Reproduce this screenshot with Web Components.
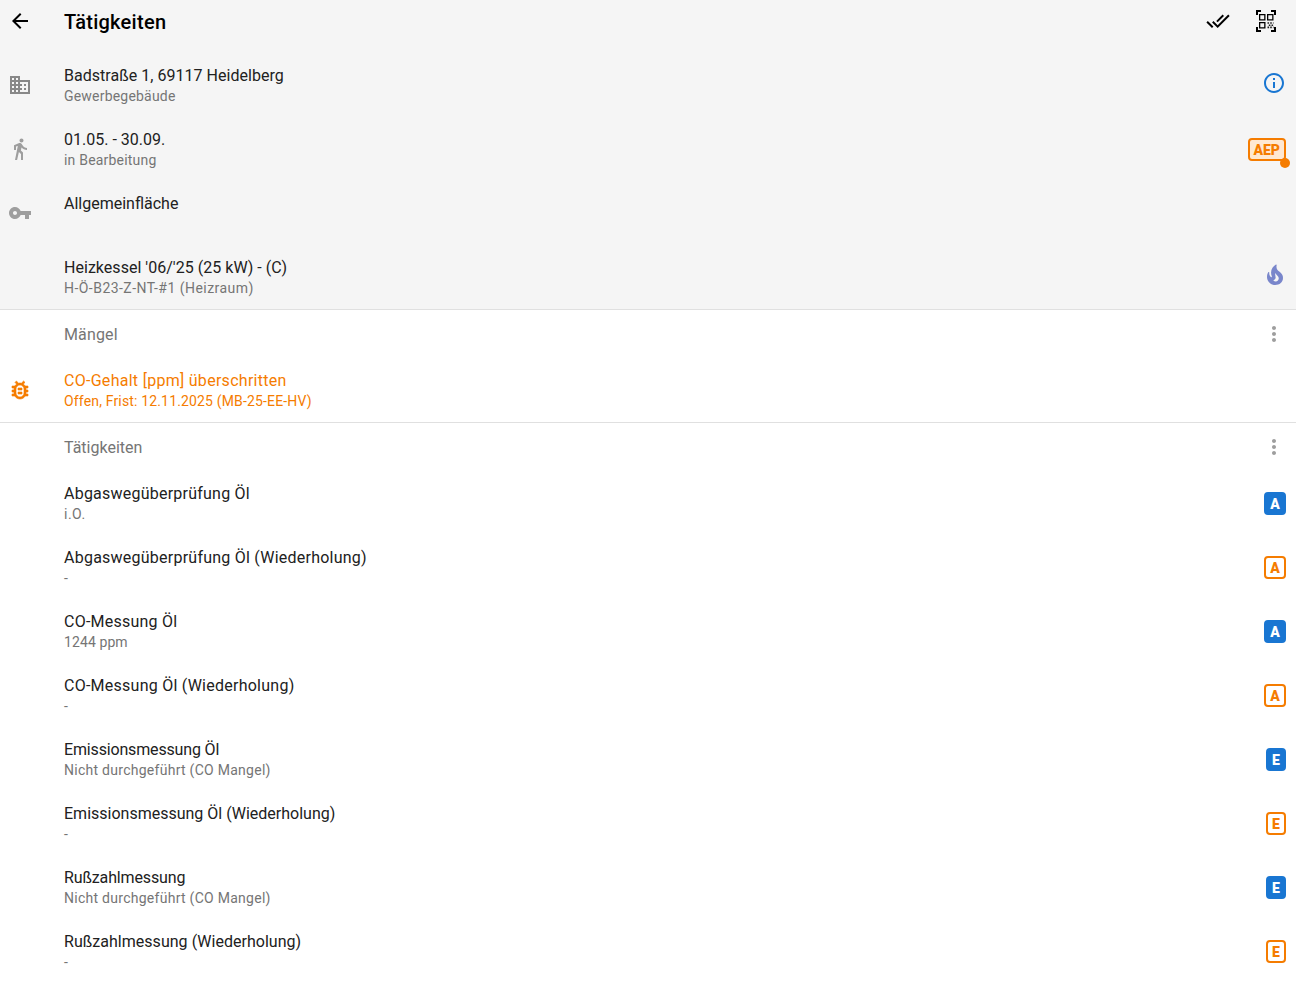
<!DOCTYPE html>
<html>
<head>
<meta charset="utf-8">
<title>Tätigkeiten</title>
<style>
  html, body { margin: 0; background: #fff; }
  body { font-family: Roboto, "Liberation Sans", sans-serif; }
</style>
</head>
<body>
<app-screen>
  <app-header slot="top" title="Tätigkeiten"></app-header>
  <info-row slot="top" main="Badstraße 1, 69117 Heidelberg" track=".03" sub="Gewerbegebäude" sub-track=".2" icon="domain" action="info"></info-row>
  <info-row slot="top" main="01.05. - 30.09." sub="in Bearbeitung" sub-track=".2" icon="walk" action="aep"></info-row>
  <info-row slot="top" main="Allgemeinfläche" sub="&nbsp;" icon="key"></info-row>
  <info-row slot="top" main="Heizkessel '06/'25 (25 kW) - (C)" track=".03" sub="H-Ö-B23-Z-NT-#1 (Heizraum)" sub-track=".46" action="fire"></info-row>

  <section-head title="Mängel" track=".15"></section-head>
  <info-row main="CO-Gehalt [ppm] überschritten" track=".28" sub="Offen, Frist: 12.11.2025 (MB-25-EE-HV)" sub-track=".16" icon="bug" tone="warn"></info-row>
  <list-divider></list-divider>
  <section-head title="Tätigkeiten"></section-head>
  <info-row main="Abgaswegüberprüfung Öl" track=".23" sub="i.O." sub-track=".5" badge="A" badge-style="solid"></info-row>
  <info-row main="Abgaswegüberprüfung Öl (Wiederholung)" track=".24" sub="-" badge="A"></info-row>
  <info-row main="CO-Messung Öl" track=".23" sub="1244 ppm" sub-track=".1" badge="A" badge-style="solid"></info-row>
  <info-row main="CO-Messung Öl (Wiederholung)" track=".25" sub="-" badge="A"></info-row>
  <info-row main="Emissionsmessung Öl" track="-.16" sub="Nicht durchgeführt (CO Mangel)" sub-track=".27" badge="E" badge-style="solid"></info-row>
  <info-row main="Emissionsmessung Öl (Wiederholung)" sub="-" badge="E"></info-row>
  <info-row main="Rußzahlmessung" track="-.14" sub="Nicht durchgeführt (CO Mangel)" sub-track=".27" badge="E" badge-style="solid"></info-row>
  <info-row main="Rußzahlmessung (Wiederholung)" track=".03" sub="-" badge="E"></info-row>
</app-screen>

<script>
const ICONS = {
  back: 'M20 11H7.83l5.59-5.59L12 4l-8 8 8 8 1.41-1.41L7.83 13H20v-2z',
  done: 'M18 7l-1.41-1.41-6.34 6.34 1.41 1.41L18 7zm4.24-1.41L11.66 16.17 7.48 12l-1.41 1.41L11.66 19l12-12-1.42-1.41zM.41 13.41L6 19l1.41-1.41L1.83 12 .41 13.41z',
  domain: 'M12 7V3H2v18h20V7H12zM6 19H4v-2h2v2zm0-4H4v-2h2v2zm0-4H4V9h2v2zm0-4H4V5h2v2zm4 12H8v-2h2v2zm0-4H8v-2h2v2zm0-4H8V9h2v2zm0-4H8V5h2v2zm10 12h-8v-2h2v-2h-2v-2h2v-2h-2V9h8v10zm-2-8h-2v2h2v-2zm0 4h-2v2h2v-2z',
  walk: 'M13.5 5.5c1.1 0 2-.9 2-2s-.9-2-2-2-2 .9-2 2 .9 2 2 2zM9.8 8.9L7 23h2.1l1.8-8 2.1 2v6h2v-7.5l-2.1-2 .6-3C14.8 12 16.8 13 19 13v-2c-1.9 0-3.5-1-4.3-2.4l-1-1.6c-.4-.6-1-1-1.7-1-.3 0-.5.1-.8.1L6 8.3V13h2V9.6l1.8-.7',
  key: 'M12.65 10C11.83 7.67 9.61 6 7 6c-3.31 0-6 2.69-6 6s2.69 6 6 6c2.61 0 4.83-1.67 5.65-4H17v4h4v-4h2v-4H12.65zM7 14c-1.1 0-2-.9-2-2s.9-2 2-2 2 .9 2 2-.9 2-2 2z',
  info: 'M11 7h2v2h-2zm0 4h2v6h-2zm1-9C6.48 2 2 6.48 2 12s4.48 10 10 10 10-4.48 10-10S17.52 2 12 2zm0 18c-4.41 0-8-3.59-8-8s3.59-8 8-8 8 3.59 8 8-3.59 8-8 8z',
  bug: 'M20 8h-2.81c-.45-.78-1.07-1.45-1.82-1.96L17 4.41 15.59 3l-2.17 2.17C12.96 5.06 12.49 5 12 5s-.96.06-1.41.17L8.41 3 7 4.41l1.62 1.63C7.88 6.55 7.26 7.22 6.81 8H4v2h2.09c-.05.33-.09.66-.09 1v1H4v2h2v1c0 .34.04.67.09 1H4v2h2.81c1.04 1.79 2.97 3 5.19 3s4.15-1.21 5.19-3H20v-2h-2.09c.05-.33.09-.66.09-1v-1h2v-2h-2v-1c0-.34-.04-.67-.09-1H20V8zm-4 7c0 2.21-1.79 4-4 4s-4-1.79-4-4v-4c0-2.21 1.79-4 4-4s4 1.79 4 4v4zm-6-1h4v2h-4zm0-4h4v2h-4z',
  fire: 'M19.48 12.35c-1.57-4.08-7.16-4.3-5.81-10.23.1-.44-.37-.78-.75-.55C9.29 3.71 6.68 8 8.87 13.62c.18.46-.36.89-.75.59-1.81-1.37-2-3.34-1.84-4.75.06-.52-.62-.77-.91-.34C4.69 10.16 4 11.84 4 14.37c.38 5.6 5.11 7.32 6.81 7.54 2.43.31 5.06-.14 6.95-1.87 2.08-1.93 2.84-5.01 1.72-7.69zm-9.28 5.03c1.44-.35 2.18-1.39 2.38-2.31.33-1.43-.96-2.83-.09-5.09.33 1.87 3.27 3.04 3.27 5.08.08 2.53-2.66 4.7-5.56 2.32z',
  dots: 'M12 8c1.1 0 2-.9 2-2s-.9-2-2-2-2 .9-2 2 .9 2 2 2zm0 2c-1.1 0-2 .9-2 2s.9 2 2 2 2-.9 2-2-.9-2-2-2zm0 6c-1.1 0-2 .9-2 2s.9 2 2 2 2-.9 2-2-.9-2-2-2z'
};

function iconSvg(name, size, color, extra = '') {
  return `<svg width="${size}" height="${size}" viewBox="0 0 24 24" fill="${color}" ${extra}><path d="${ICONS[name]}"/></svg>`;
}

class AppScreen extends HTMLElement {
  constructor() {
    super();
    this.attachShadow({ mode: 'open' }).innerHTML = `
      <style>
        :host { display: block; width: 1296px; height: 982px; overflow: hidden; background: #fff; }
        .top { background: #f5f5f5; border-bottom: 1px solid #e0e0e0; }
      </style>
      <div class="top"><slot name="top"></slot></div>
      <slot></slot>`;
  }
}

class AppHeader extends HTMLElement {
  constructor() {
    super();
    this.attachShadow({ mode: 'open' }).innerHTML = `
      <style>
        :host { display: flex; align-items: center; height: 42px; padding-bottom: 11px; }
        .back { width: 40px; margin-right: 24px; display: flex; justify-content: center; }
        h1 { flex: 1; margin: 2px 0 0; font: 500 20px Roboto, sans-serif; letter-spacing: .27px; color: #000; }
        .actions { display: flex; gap: 24px; padding-right: 18px; }
        svg { display: block; }
      </style>
      <div class="back">${iconSvg('back', 24, '#000')}</div>
      <h1>${this.getAttribute('title')}</h1>
      <div class="actions">
        ${iconSvg('done', 24, '#000')}
        <svg width="24" height="24" viewBox="0 0 24 24" fill="none" stroke="#000" stroke-width="2">
          <path d="M3 6V2h4M17 2h4v4M3 18v4h4M17 22h4v-4"/>
          <path stroke-width="1.3" d="M5.65 5.65h5.2v5.2h-5.2zM13.65 5.65h5.2v5.2h-5.2zM5.65 13.65h5.2v5.2h-5.2z"/>
          <path stroke-width="1.6" stroke="#222" stroke-dasharray="1.6 1.1" d="M13.5 14h6M14.8 16.2h4.7M13.5 18.4h6"/>
        </svg>
      </div>`;
  }
}

class SectionHead extends HTMLElement {
  constructor() {
    super();
    const track = this.getAttribute('track') || 0;
    this.attachShadow({ mode: 'open' }).innerHTML = `
      <style>
        :host { display: flex; align-items: center; height: 48px; padding: 0 10px 0 64px; font: 400 16px Roboto, sans-serif; color: #757575; }
        span { flex: 1; letter-spacing: ${track}px; }
        svg { display: block; }
      </style>
      <span>${this.getAttribute('title')}</span>
      ${iconSvg('dots', 24, '#9e9e9e')}`;
  }
}

class ListDivider extends HTMLElement {
  constructor() {
    super();
    this.attachShadow({ mode: 'open' }).innerHTML = `
      <style>:host { display: block; height: 1px; background: #e0e0e0; }</style>`;
  }
}

class InfoRow extends HTMLElement {
  constructor() {
    super();
    const warn = this.getAttribute('tone') === 'warn';
    const icon = this.getAttribute('icon');
    const iconColor = warn ? '#f57c00' : (icon === 'domain' ? '#888' : '#9e9e9e');
    // the bug glyph is drawn a little heavier in the reference
    const extra = icon === 'bug' ? `stroke="${iconColor}" stroke-width=".6"` : '';
    this.attachShadow({ mode: 'open' }).innerHTML = `
      <style>
        :host { display: flex; align-items: center; height: 64px; font-family: Roboto, sans-serif; }
        .lead { width: 40px; margin-right: 24px; display: flex; justify-content: center; }
        .text { flex: 1; display: flex; flex-direction: column; gap: 1px; }
        .main { font-size: 16px; line-height: 20px; letter-spacing: ${this.getAttribute('track') || 0}px; color: ${warn ? '#f57c00' : '#212121'}; }
        .sub { font-size: 14px; line-height: 18px; letter-spacing: ${this.getAttribute('sub-track') || 0}px; color: ${warn ? '#f57c00' : '#757575'}; }
        .end { padding-right: 10px; display: flex; justify-content: flex-end; }
        svg { display: block; }
        .lift { margin-bottom: 4px; }
        .fire { margin-right: -1px; }
        .aep { position: relative; padding: 0 4px; height: 19px; line-height: 21px; border: 2px solid #f57c00; border-radius: 4px; background: #ffe8d1; color: #f57c00; font-size: 14px; font-weight: 900; }
        .aep::after { content: ""; position: absolute; right: -6px; bottom: -9px; width: 10px; height: 10px; border-radius: 50%; background: #f57c00; }
        .badge { margin-top: 1px; height: 19px; line-height: 21px; border: 2px solid #f57c00; border-radius: 4px; text-align: center; color: #f57c00; font-size: 14px; font-weight: 900; }
        .badge.solid { background: #1976d2; border-color: #1976d2; color: #fff; }
      </style>
      <div class="lead">${icon ? iconSvg(icon, 24, iconColor, extra) : ''}</div>
      <div class="text">
        <span class="main">${this.getAttribute('main')}</span>
        <span class="sub">${this.getAttribute('sub')}</span>
      </div>
      <div class="end">${this.endMarkup()}</div>`;
  }

  endMarkup() {
    const action = this.getAttribute('action');
    const badge = this.getAttribute('badge');
    if (action === 'info') return `<div class="lift">${iconSvg('info', 24, '#1976d2')}</div>`;
    if (action === 'fire') return `<div class="lift fire">${iconSvg('fire', 24, '#7986cb')}</div>`;
    if (action === 'aep') return '<span class="aep">AEP</span>';
    if (badge) {
      const solid = this.getAttribute('badge-style') === 'solid' ? ' solid' : '';
      return `<span class="badge${solid}" style="width:${badge === 'A' ? 18 : 16}px">${badge}</span>`;
    }
    return '';
  }
}

customElements.define('app-screen', AppScreen);
customElements.define('app-header', AppHeader);
customElements.define('section-head', SectionHead);
customElements.define('list-divider', ListDivider);
customElements.define('info-row', InfoRow);
</script>
</body>
</html>
